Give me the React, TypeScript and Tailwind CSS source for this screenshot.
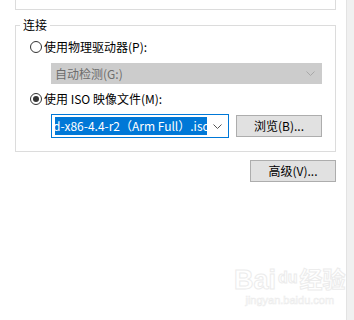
import React from "react";

const FONT = "font-['Microsoft_YaHei','Noto_Sans_CJK_SC','Noto_Sans',sans-serif]";

function Radio({ checked }: { checked?: boolean }) {
  return (
    <span className="w-[12px] h-[12px] rounded-full border border-[#333333] bg-white flex items-center justify-center shrink-0">
      {checked && <span className="w-[6px] h-[6px] rounded-full bg-[#333333]" />}
    </span>
  );
}

function Chevron({ color }: { color: string }) {
  return (
    <svg width="9" height="5" viewBox="0 0 9 5" className="shrink-0">
      <polyline points="0.5,0.5 4.5,4.5 8.5,0.5" fill="none" stroke={color} strokeWidth="1" />
    </svg>
  );
}

export default function App() {
  return (
    <div className={`flex w-[354px] h-[320px] bg-white text-[12px] text-black ${FONT}`}>
      <div className="relative flex-1 flex flex-col">
        <div className="ml-[15px] w-[321px] h-[10px] border-x border-b border-[#dcdcdc]" />
        <fieldset className="ml-[15px] mt-[7px] w-[321px] border border-[#dcdcdc] p-0 m-0">
          <legend className="ml-[4px] px-[3px] leading-[16px]">连接</legend>
          <div className="pl-[14px] pt-[6px] pb-[13px] flex flex-col">
            <div className="h-[16px] flex items-center gap-[2px] leading-[16px]">
              <Radio />
              <span>使用物理驱动器(P):</span>
            </div>
            <div className="mt-[8px] ml-[21px] w-[271px] h-[21px] bg-[#cccccc] flex items-center pl-[4px] pr-[7px] text-[#6d6d6d]">
              <span className="flex-1">自动检测(G:)</span>
              <Chevron color="#a8a8a8" />
            </div>
            <div className="mt-[7px] h-[16px] flex items-center gap-[2px] leading-[16px]">
              <Radio checked />
              <span>使用 ISO 映像文件(M):</span>
            </div>
            <div className="mt-[7px] ml-[21px] flex items-start">
              <div className="w-[178px] h-[24px] border border-[#0078d7] flex items-center pl-[3px] pr-[6px]">
                <span className="w-[152px] h-[18px] overflow-hidden whitespace-nowrap bg-[#0078d7] text-white leading-[18px]">
                  <span className="-ml-[2px]">d-x86-4.4-r2（Arm Full）.iso</span>
                </span>
                <span className="ml-auto">
                  <Chevron color="#555555" />
                </span>
              </div>
              <div className="ml-[7px] mt-[1px] w-[86px] h-[22px] bg-[#e1e1e1] border border-[#adadad] flex items-center justify-center">
                浏览(B)...
              </div>
            </div>
          </div>
        </fieldset>
        <div className="ml-[15px] w-[321px] mt-[8px] flex justify-end">
          <div className="w-[86px] h-[22px] bg-[#e1e1e1] border border-[#adadad] flex items-center justify-center">
            高级(V)...
          </div>
        </div>
        <div className="absolute left-[234px] top-[264px] whitespace-nowrap flex flex-col items-center text-transparent [-webkit-text-stroke:1px_#ececec] font-['Liberation_Sans','Noto_Sans_CJK_SC',sans-serif]">
          <div className="flex items-end leading-[28px]">
            <span className="text-[27px] font-bold">Bai</span>
            <span className="text-[16px] font-bold mx-[2px] mb-[2px]">du</span>
            <span className="text-[23px] font-bold">经验</span>
          </div>
          <span className="text-[11px] leading-[13px] [-webkit-text-stroke:0.6px_#ececec]">jingyan.baidu.com</span>
        </div>
      </div>
      <div className="w-[8px] h-full border-l border-[#e3e3e3] bg-[#f0f0f0]" />
    </div>
  );
}
